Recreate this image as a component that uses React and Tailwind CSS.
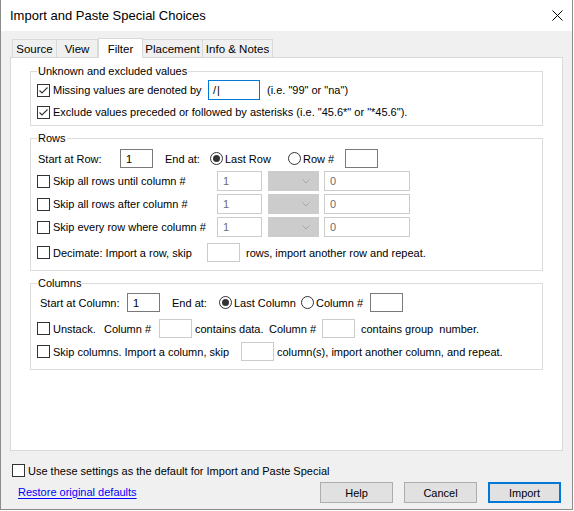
import React from "react";

// Windows-style "Import and Paste Special Choices" dialog, Filter tab selected
const Check = ({ checked }) => (
  <span className="w-[13px] h-[13px] shrink-0 border border-[#333333] bg-white flex items-center justify-center">
    {checked && (
      <svg width="11" height="11" viewBox="0 0 11 11">
        <path d="M1.5 5.5 L4 8 L9.5 2.5" fill="none" stroke="#333333" strokeWidth="1.1" />
      </svg>
    )}
  </span>
);

const Radio = ({ checked }) => (
  <span className="w-[13px] h-[13px] shrink-0 rounded-full border border-[#333333] bg-white flex items-center justify-center">
    {checked && <span className="w-[7px] h-[7px] rounded-full bg-[#333333]" />}
  </span>
);

const Drop = () => (
  <span className="w-[51px] h-[20px] shrink-0 bg-[#cccccc] border border-[#cccccc] flex items-center justify-end pr-[8px]">
    <svg width="8" height="5" viewBox="0 0 8 5">
      <path d="M0.5 0.5 L4 4 L7.5 0.5" fill="none" stroke="#a8a8a8" strokeWidth="1" />
    </svg>
  </span>
);

const Group = ({ label, className, children }) => (
  <div className={"relative mx-[19px] border border-[#dcdcdc] " + className}>
    <span className="absolute left-[6px] top-[-9px] bg-white px-[1px] leading-[16px]">{label}</span>
    {children}
  </div>
);

const Tab = ({ label, active, w }) =>
  active ? (
    <div className={"h-[20px] bg-white border border-b-0 border-[#d9d9d9] -mb-px relative z-10 flex items-center justify-center " + w}>
      {label}
    </div>
  ) : (
    <div className={"h-[18px] bg-[#f0f0f0] border border-b-0 border-[#d9d9d9] -ml-px first:ml-0 flex items-center justify-center " + w}>
      {label}
    </div>
  );

export default function App() {
  return (
    <div className="w-[574px] h-[511px] bg-white font-['Liberation_Sans',Arial,sans-serif] text-[11px] text-black leading-[16px] whitespace-nowrap">
      <div className="w-[573px] h-[510px] border-x border-b border-[#8c8c8c] bg-[#f0f0f0] flex flex-col">
        {/* Title bar */}
        <div className="h-[31px] bg-white flex items-center justify-between pl-[9px] pr-[9px]">
          <span className="text-[13px]">Import and Paste Special Choices</span>
          <svg width="11" height="11" viewBox="0 0 11 11">
            <path d="M0.5 0.5 L10.5 10.5 M10.5 0.5 L0.5 10.5" stroke="#000" strokeWidth="1" />
          </svg>
        </div>

        {/* Tabs */}
        <div className="flex items-end pl-[11px] mt-[7px] text-[11.5px]">
          <Tab label="Source" w="w-[45px]" />
          <Tab label="View" w="w-[42px]" />
          <Tab label="Filter" active w="w-[45px]" />
          <Tab label="Placement" w="w-[61px]" />
          <Tab label="Info & Notes" w="w-[71px]" />
        </div>

        {/* Panel */}
        <div className="ml-[9px] w-[553px] h-[394px] bg-white border border-[#d9d9d9] pt-[13px]">
          <Group label="Unknown and excluded values" className="pt-[8px] pb-[3px] pl-[6px]">
            <div className="h-[20px] flex items-center">
              <Check checked />
              <span className="ml-[3px] w-[155px]">Missing values are denoted by</span>
              <span className="w-[52px] h-[20px] border border-[#0078d7] flex items-center pl-[4px]">/<span className="ml-[1px]">|</span></span>
              <span className="ml-[7px]">(i.e. "99" or "na")</span>
            </div>
            <div className="h-[20px] mt-[2px] flex items-center">
              <Check checked />
              <span className="ml-[3px]">Exclude values preceded or followed by asterisks (i.e. "45.6*" or "*45.6").</span>
            </div>
          </Group>

          <Group label="Rows" className="mt-[12px] pt-[10px] pb-[8px] pl-[6px]">
            <div className="h-[19px] flex items-center">
              <span className="ml-[1px] w-[82px]">Start at Row:</span>
              <span className="w-[33px] h-[19px] border border-[#7a7a7a] flex items-center pl-[5px]">1</span>
              <span className="ml-[12px] w-[45px]">End at:</span>
              <Radio checked />
              <span className="ml-[2px] w-[63px]">Last Row</span>
              <Radio />
              <span className="ml-[2px] w-[42px]">Row #</span>
              <span className="w-[33px] h-[19px] border border-[#7a7a7a]" />
            </div>
            {["Skip all rows until column #", "Skip all rows after column #", "Skip every row where column #"].map((t) => (
              <div key={t} className="h-[20px] mt-[3px] flex items-center">
                <Check />
                <span className="ml-[3px] w-[164px]">{t}</span>
                <span className="w-[45px] h-[20px] border border-[#cccccc] flex items-center pl-[5px] text-[#6d6d6d]">1</span>
                <span className="ml-[6px]"><Drop /></span>
                <span className="ml-[5px] w-[86px] h-[20px] border border-[#cccccc] flex items-center pl-[5px] text-[#6d6d6d]">0</span>
              </div>
            ))}
            <div className="h-[19px] mt-[6px] flex items-center">
              <Check />
              <span className="ml-[3px] w-[154px]">Decimate: Import a row, skip</span>
              <span className="w-[33px] h-[19px] border border-[#cccccc]" />
              <span className="ml-[6px]">rows, import another row and repeat.</span>
            </div>
          </Group>

          <Group label="Columns" className="mt-[12px] pt-[9px] pb-[8px] pl-[6px]">
            <div className="h-[19px] flex items-center">
              <span className="ml-[3px] w-[87px]">Start at Column:</span>
              <span className="w-[33px] h-[19px] border border-[#7a7a7a] flex items-center pl-[5px]">1</span>
              <span className="ml-[12px] w-[47px]">End at:</span>
              <Radio checked />
              <span className="ml-[2px] w-[67px]">Last Column</span>
              <Radio />
              <span className="ml-[2px] w-[54px]">Column #</span>
              <span className="w-[33px] h-[19px] border border-[#7a7a7a]" />
            </div>
            <div className="h-[19px] mt-[7px] flex items-center">
              <Check />
              <span className="ml-[3px] w-[51px]">Unstack.</span>
              <span className="w-[55px]">Column #</span>
              <span className="w-[33px] h-[19px] border border-[#cccccc]" />
              <span className="ml-[3px] w-[74px]">contains data.</span>
              <span className="w-[53px]">Column #</span>
              <span className="w-[33px] h-[19px] border border-[#cccccc]" />
              <span className="ml-[6px]">contains group&nbsp; number.</span>
            </div>
            <div className="h-[19px] mt-[4px] flex items-center">
              <Check />
              <span className="ml-[3px] w-[188px]">Skip columns. Import a column, skip</span>
              <span className="w-[33px] h-[19px] border border-[#cccccc]" />
              <span className="ml-[3px]">column(s), import another column, and repeat.</span>
            </div>
          </Group>
        </div>

        {/* Footer */}
        <div className="mt-[13px] ml-[11px] h-[13px] flex items-center">
          <Check />
          <span className="ml-[3px]">Use these settings as the default for Import and Paste Special</span>
        </div>
        <div className="mt-[5px] flex items-center">
          <a className="ml-[17px] mt-[-2px] text-[#0000ff] underline underline-offset-2">Restore original defaults</a>
          <div className="ml-auto mr-[11px] flex gap-[11px]">
            <button className="w-[73px] h-[21px] bg-[#e1e1e1] border border-[#adadad]">Help</button>
            <button className="w-[73px] h-[21px] bg-[#e1e1e1] border border-[#adadad]">Cancel</button>
            <button className="w-[73px] h-[21px] bg-[#e1e1e1] border-2 border-[#0078d7]">Import</button>
          </div>
        </div>
      </div>
    </div>
  );
}
